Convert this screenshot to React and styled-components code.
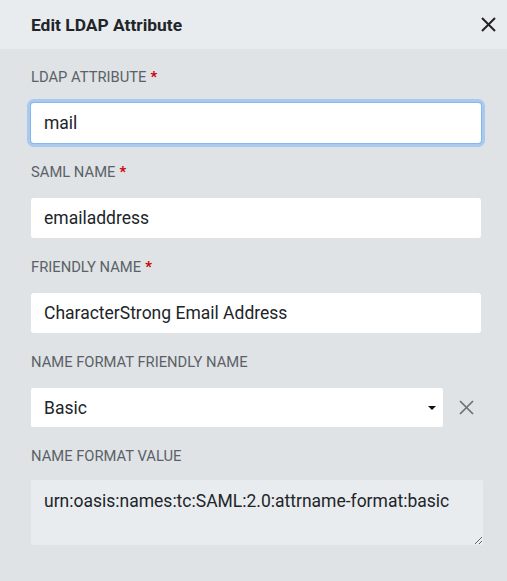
import React from "react";
import styled, { createGlobalStyle } from "styled-components";

const Global = createGlobalStyle`
  html, body { margin: 0; padding: 0; }
  body {
    background: #dfe3e6;
    font-family: Roboto, "Liberation Sans", Arial, sans-serif;
    color: #212529;
  }
  * { box-sizing: border-box; }
`;

const Dialog = styled.div`
  width: 507px;
  min-height: 581px;
  background: #dfe3e6;
  display: flex;
  flex-direction: column;
`;

const Header = styled.div`
  height: 49px;
  background: #e9ecef;
  display: flex;
  align-items: center;
  justify-content: space-between;
  padding: 0 11px 0 31px;
`;

const Title = styled.h1`
  margin: 0;
  font-size: 17.4px;
  font-weight: 700;
  color: #212529;
`;

const IconButton = styled.button`
  border: 0;
  background: none;
  padding: 0;
  width: 15px;
  height: 15px;
  display: flex;
  color: ${(p) => p.$color || "#222"};
  cursor: pointer;
`;

const Form = styled.div`
  padding: 18px 26px 0 31px;
  display: flex;
  flex-direction: column;
`;

const Field = styled.div`
  display: flex;
  flex-direction: column;
  margin-bottom: 19px;
`;

const Label = styled.label`
  font-size: 14.75px;
  line-height: 20px;
  color: #5b6166;
  text-transform: uppercase;
  margin-bottom: ${(p) => p.$gap || 16}px;
`;

const Required = styled.span`
  color: #cc0000;
  font-weight: 700;
  margin-left: 4px;
`;

const Input = styled.input`
  width: 450px;
  height: 40px;
  border: 0;
  border-radius: 3px;
  background: #fff;
  padding: 0 12px 0 13px;
  font-family: inherit;
  font-size: 17.5px;
  color: #212529;
  outline: none;
  box-shadow: ${(p) =>
    p.$focused ? "0 0 0 1px #86b7f2, 0 0 0 4px #a9c9ef" : "none"};
`;

const SelectRow = styled.div`
  display: flex;
  align-items: center;
  gap: 16px;
`;

const SelectBox = styled.div`
  width: 412px;
  height: 39px;
  background: #fff;
  border-radius: 2px;
  display: flex;
  align-items: center;
  justify-content: space-between;
  padding: 0 7px 0 13px;
  font-size: 17.5px;
  color: #212529;
`;

const Caret = styled.span`
  width: 0;
  height: 0;
  border-left: 4px solid transparent;
  border-right: 4px solid transparent;
  border-top: 4px solid #111;
  margin-top: 1px;
`;

const TextArea = styled.textarea`
  width: 452px;
  height: 65px;
  border: 0;
  border-radius: 2px;
  background: #e9ecef;
  padding: 9px 12px 0 13px;
  font-family: inherit;
  font-size: 17.5px;
  line-height: 24px;
  color: #212529;
  resize: vertical;
  outline: none;
`;

const XIcon = ({ width = 2 }) => (
  <svg width="15" height="15" viewBox="0 0 15 15" fill="none">
    <path
      d="M1 1L14 14M14 1L1 14"
      stroke="currentColor"
      strokeWidth={width}
      strokeLinecap="butt"
    />
  </svg>
);

export default function App() {
  return (
    <>
      <Global />
      <Dialog>
        <Header>
          <Title>Edit LDAP Attribute</Title>
          <IconButton aria-label="Close">
            <XIcon width={2} />
          </IconButton>
        </Header>
        <Form>
          <Field>
            <Label>
              LDAP Attribute<Required>*</Required>
            </Label>
            <Input $focused defaultValue="mail" />
          </Field>
          <Field>
            <Label>
              SAML Name<Required>*</Required>
            </Label>
            <Input defaultValue="emailaddress" />
          </Field>
          <Field>
            <Label>
              Friendly Name<Required>*</Required>
            </Label>
            <Input defaultValue="CharacterStrong Email Address" />
          </Field>
          <Field>
            <Label>Name Format Friendly Name</Label>
            <SelectRow>
              <SelectBox>
                <span>Basic</span>
                <Caret />
              </SelectBox>
              <IconButton $color="#6c7177" aria-label="Clear">
                <XIcon width={1.7} />
              </IconButton>
            </SelectRow>
          </Field>
          <Field>
            <Label $gap={14}>Name Format Value</Label>
            <TextArea
              readOnly
              defaultValue="urn:oasis:names:tc:SAML:2.0:attrname-format:basic"
            />
          </Field>
        </Form>
      </Dialog>
    </>
  );
}
